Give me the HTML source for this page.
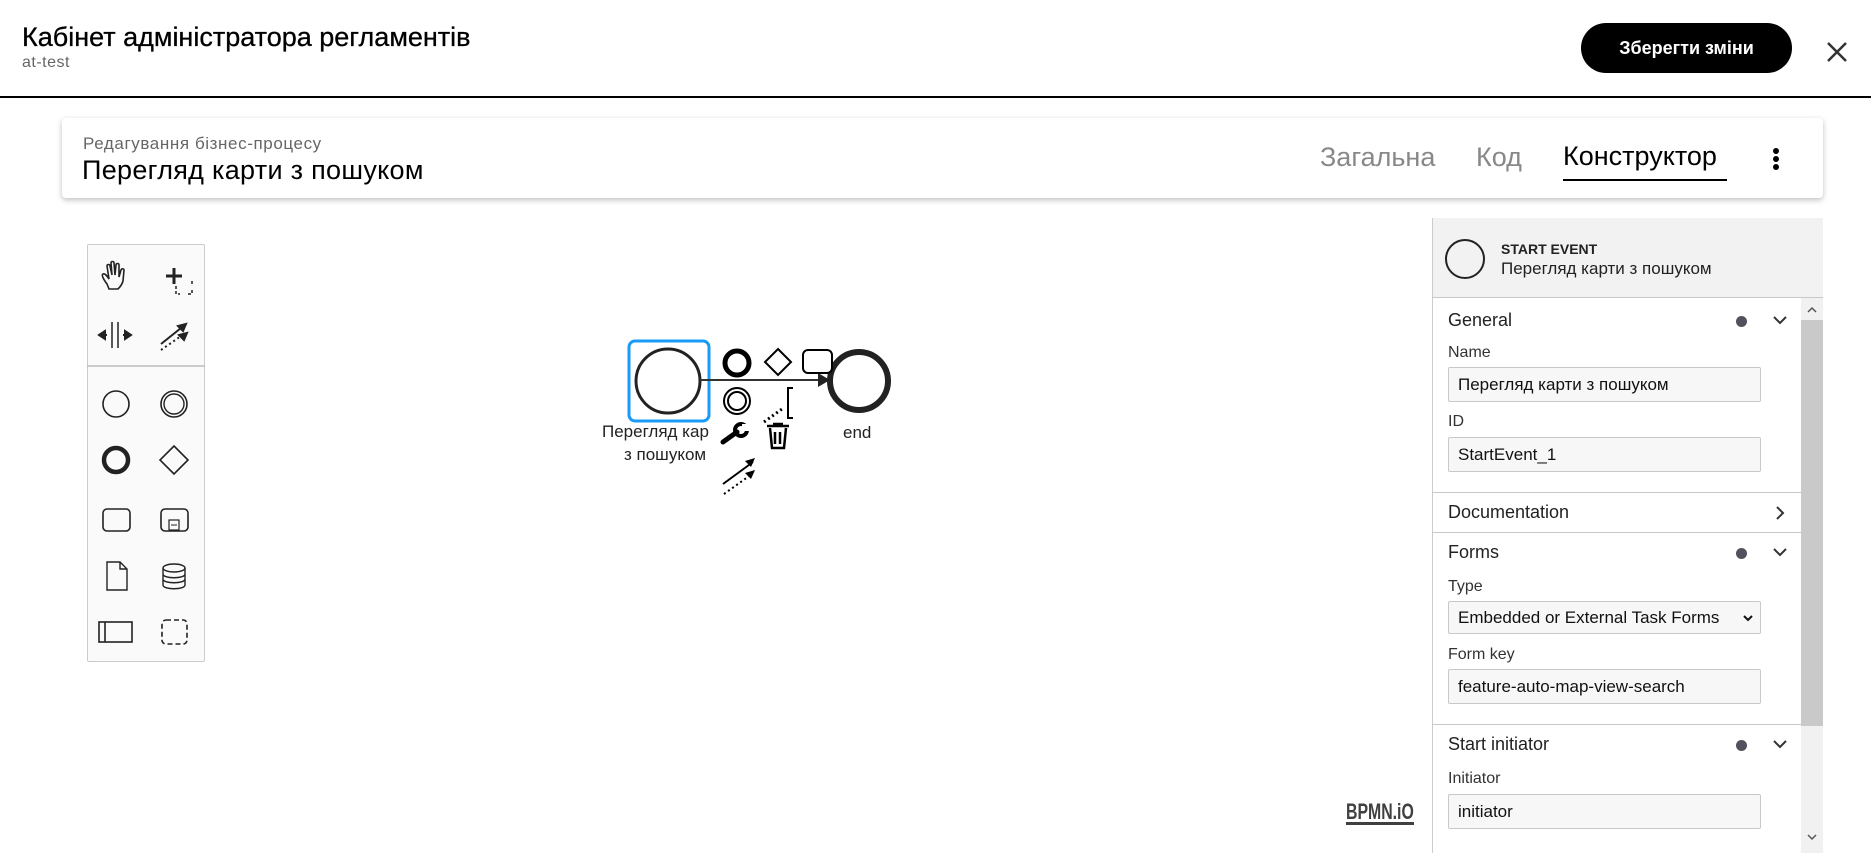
<!DOCTYPE html>
<html><head><meta charset="utf-8">
<style>
*{box-sizing:border-box;margin:0;padding:0}
body{width:1871px;height:853px;overflow:hidden;background:#fff;font-family:"Liberation Sans","Noto Sans CJK SC",sans-serif;position:relative;color:#000}
.a{position:absolute;white-space:nowrap}
.inp{position:absolute;left:1448px;width:313px;height:35px;background:#f7f7f8;border:1px solid #c8c8cc;border-radius:2px;font-size:17px;padding:7px 0 0 9px;color:#111}
.lbl{position:absolute;left:1448px;font-size:16px;color:#333}
.sec{position:absolute;left:1448px;font-size:18px;color:#222}
.hr{position:absolute;left:1432px;width:369px;height:1px;background:#c8c8cc}
.dot{position:absolute;left:1736px;width:11px;height:11px;border-radius:50%;background:#52525e}
</style></head><body>
<div class="a" style="left:22px;top:22px;font-size:27px;-webkit-text-stroke:0.3px #000">Кабінет адміністратора регламентів</div>
<div class="a" style="left:22px;top:54px;font-size:16px;color:#666;letter-spacing:0.5px">at-test</div>
<div class="a" style="left:1581px;top:23px;width:211px;height:50px;border-radius:25px;background:#000;color:#fff;font-size:18px;font-weight:bold;text-align:center;line-height:50px">Зберегти зміни</div>
<svg class="a" style="left:1826px;top:41px" width="22" height="22"><path d="M2 2L20 20M20 2L2 20" stroke="#333" stroke-width="2.5"/></svg>
<div class="a" style="left:0;top:96px;width:1871px;height:2px;background:#000"></div>

<div class="a" style="left:62px;top:118px;width:1761px;height:80px;background:#fff;border-radius:4px;box-shadow:0 2px 6px rgba(0,0,0,.25)"></div>
<div class="a" style="left:83px;top:134px;font-size:17px;color:#666;letter-spacing:0.6px">Редагування бізнес-процесу</div>
<div class="a" style="left:82px;top:155px;font-size:27px;letter-spacing:0.3px">Перегляд карти з пошуком</div>
<div class="a" style="left:1320px;top:142px;font-size:27px;color:#888">Загальна</div>
<div class="a" style="left:1476px;top:142px;font-size:27px;color:#888">Код</div>
<div class="a" style="left:1563px;top:141px;font-size:27px;color:#000">Конструктор</div>
<div class="a" style="left:1563px;top:179px;width:164px;height:2px;background:#000"></div>
<div class="a" style="left:1773px;top:148px;width:6px;height:6px;border-radius:50%;background:#000"></div>
<div class="a" style="left:1773px;top:156px;width:6px;height:6px;border-radius:50%;background:#000"></div>
<div class="a" style="left:1773px;top:164px;width:6px;height:6px;border-radius:50%;background:#000"></div>

<!-- toolbox -->
<div class="a" style="left:87px;top:244px;width:118px;height:418px;background:#fafafa;border:1px solid #ccc;border-radius:2px"></div>
<svg class="a" style="left:87px;top:244px" width="118" height="418" fill="none" stroke="#222" stroke-width="2">
<g transform="translate(0,8)">
<path d="M20 32c-3-4-6-9-4-10s4 2 6 5l-2-13c0-2 3-2 3 0l2 9-1-12c0-2 3-2 3 0l1 12 1-10c0-2 3-2 3 0v12l2-7c1-2 3-1 3 0l-1 11c-1 4-3 6-5 8h-9z" stroke-width="1.6"/>
<path d="M79 24h16M87 16v16" stroke-width="3"/><path d="M89 34v8h4M101 42h4v-4M105 32v-4" stroke-width="1.5" stroke-dasharray="3 2"/>
</g>
<path d="M25 78v26M31 78v26" stroke-width="1.5"/><path d="M12 91l6-4v8zM44 91l-6-4v8z" fill="#222"/><path d="M12 91h8M36 91h8" />
<path d="M74 100l20-16" /><path d="M99 80l-8 2 5 5z" fill="#222"/><path d="M74 106l20-14" stroke-dasharray="2 3"/><path d="M100 89l-8 2 5 5z" fill="#222"/>
<path d="M0 122h118" stroke="#bbb" stroke-width="1.5"/>
<circle cx="29" cy="160" r="13" stroke-width="1.6"/>
<circle cx="87" cy="160" r="13" stroke-width="1.6"/><circle cx="87" cy="160" r="10" stroke-width="1.4"/>
<circle cx="29" cy="216" r="12" stroke-width="4.5"/>
<path d="M87 202l14 14-14 14-14-14z" stroke-width="1.6"/>
<rect x="16" y="265" width="27" height="22" rx="4" stroke-width="1.6"/>
<rect x="74" y="265" width="27" height="22" rx="4" stroke-width="1.6"/><rect x="82" y="276" width="10" height="10" stroke-width="1.2"/><path d="M84 281h6" stroke-width="1"/>
<path d="M20 318h13l7 7v21H20z M33 318v7h7" stroke-width="1.4"/>
<ellipse cx="87" cy="324" rx="11" ry="4" stroke-width="1.4"/><path d="M76 324v17c0 5 22 5 22 0v-17M76 330c0 5 22 5 22 0M76 335c0 5 22 5 22 0" stroke-width="1.4"/>
<rect x="12" y="378" width="33" height="20" stroke-width="1.6"/><path d="M18 378v20" stroke-width="1.6"/>
<rect x="75" y="376" width="25" height="24" rx="4" stroke-width="1.6" stroke-dasharray="5 3"/>
</svg>

<!-- diagram -->
<svg class="a" style="left:600px;top:320px" width="320" height="220" fill="none">
<rect x="29" y="21" width="80" height="80" rx="6" stroke="#1a9bf5" stroke-width="3"/>
<circle cx="68" cy="61" r="32" stroke="#222" stroke-width="3"/>
<path d="M100 60h128" stroke="#333" stroke-width="2"/>
<path d="M218 53l12 7-12 7z" fill="#222"/>
<circle cx="259" cy="61" r="29" stroke="#222" stroke-width="6"/>
<circle cx="137" cy="43" r="12" stroke="#000" stroke-width="5" fill="#fff"/>
<path d="M178 29l13 13-13 13-13-13z" stroke="#000" stroke-width="2" fill="#fff"/>
<rect x="203" y="30" width="29" height="23" rx="5" stroke="#000" stroke-width="2" fill="#fff"/>
<circle cx="137" cy="81" r="13" stroke="#000" stroke-width="2"/><circle cx="137" cy="81" r="9" stroke="#000" stroke-width="2"/>
<path d="M164 102l18-13" stroke="#000" stroke-width="3" stroke-dasharray="2 3"/>
<path d="M193 68h-5v30h5" stroke="#000" stroke-width="2"/>
<path d="M123 122l14-10" stroke="#000" stroke-width="5" stroke-linecap="round"/>
<circle cx="141" cy="110" r="6" stroke="#000" stroke-width="4"/>
<rect x="142" y="104" width="8" height="7" fill="#fff"/>
<path d="M167 106h22M173 104h10M170 108l2 20h12l2-20M175 112v12M180 112v12" stroke="#000" stroke-width="2.5"/>
<path d="M123 164l30-22" stroke="#000" stroke-width="2"/><path d="M155 138l-10 3 6 6z" fill="#000"/>
<path d="M124 174l28-20" stroke="#000" stroke-width="2" stroke-dasharray="2 3"/><path d="M155 150l-10 3 6 6z" fill="#000"/>
</svg>
<div class="a" style="left:602px;top:422px;font-size:17px;color:#222;width:118px;overflow:hidden">Перегляд кар</div>
<div class="a" style="left:624px;top:445px;font-size:17px;color:#222">з пошуком</div>
<div class="a" style="left:843px;top:423px;font-size:17px;color:#222">end</div>

<div class="a" style="left:1346px;top:799px;font-size:22px;font-weight:bold;color:#404040;transform:scaleX(.72);transform-origin:left">BPMN.iO</div>
<div class="a" style="left:1346px;top:822px;width:68px;height:3px;background:#404040"></div>

<!-- properties panel -->
<div class="a" style="left:1432px;top:218px;width:391px;height:635px;background:#fff;border-left:1px solid #ccc"></div>
<div class="a" style="left:1433px;top:218px;width:390px;height:80px;background:#f2f2f3;border-bottom:1px solid #c8c8cc"></div>
<svg class="a" style="left:1444px;top:238px" width="42" height="42"><circle cx="21" cy="21" r="19" fill="none" stroke="#222" stroke-width="2"/></svg>
<div class="a" style="left:1501px;top:241px;font-size:14px;font-weight:bold;color:#222">START EVENT</div>
<div class="a" style="left:1501px;top:259px;font-size:17px;color:#222">Перегляд карти з пошуком</div>
<div class="a" style="left:1801px;top:298px;width:22px;height:555px;background:#f1f1f1"></div>
<div class="a" style="left:1801px;top:320px;width:22px;height:406px;background:#c9c9c9"></div>
<svg class="a" style="left:1801px;top:300px" width="22" height="553" fill="none" stroke="#555" stroke-width="1.5"><path d="M7 12l4-4 4 4M7 535l4 4 4-4"/></svg>

<div class="sec" style="top:310px">General</div><div class="dot" style="top:316px"></div>
<svg class="a" style="left:1772px;top:312px" width="16" height="16" fill="none" stroke="#333" stroke-width="2"><path d="M2 5l6 6 6-6"/></svg>
<div class="lbl" style="top:344px">Name</div>
<div class="inp" style="top:367px">Перегляд карти з пошуком</div>
<div class="lbl" style="top:413px">ID</div>
<div class="inp" style="top:437px">StartEvent_1</div>
<div class="hr" style="top:492px"></div>
<div class="sec" style="top:502px">Documentation</div>
<svg class="a" style="left:1772px;top:505px" width="16" height="16" fill="none" stroke="#333" stroke-width="2"><path d="M5 2l6 6-6 6"/></svg>
<div class="hr" style="top:532px"></div>
<div class="sec" style="top:542px">Forms</div><div class="dot" style="top:548px"></div>
<svg class="a" style="left:1772px;top:544px" width="16" height="16" fill="none" stroke="#333" stroke-width="2"><path d="M2 5l6 6 6-6"/></svg>
<div class="lbl" style="top:578px">Type</div>
<div class="inp" style="top:601px;height:33px;padding-top:6px">Embedded or External Task Forms</div>
<svg class="a" style="left:1742px;top:612px" width="12" height="12" fill="none" stroke="#111" stroke-width="2"><path d="M2 4l4 4 4-4"/></svg>
<div class="lbl" style="top:646px">Form key</div>
<div class="inp" style="top:669px">feature-auto-map-view-search</div>
<div class="hr" style="top:724px"></div>
<div class="sec" style="top:734px">Start initiator</div><div class="dot" style="top:740px"></div>
<svg class="a" style="left:1772px;top:736px" width="16" height="16" fill="none" stroke="#333" stroke-width="2"><path d="M2 5l6 6 6-6"/></svg>
<div class="lbl" style="top:770px">Initiator</div>
<div class="inp" style="top:794px">initiator</div>
</body></html>
